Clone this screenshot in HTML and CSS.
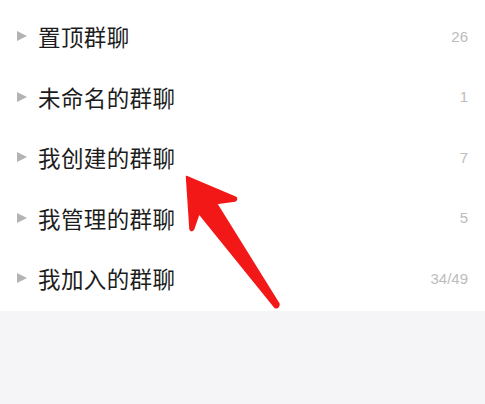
FILE: index.html
```html
<!DOCTYPE html>
<html lang="zh">
<head>
<meta charset="utf-8">
<link rel="stylesheet" href="styles.css">
</head>
<body>
<div class="page">
  <ul class="groups">
    <li class="row"><span class="caret"></span><span class="name">置顶群聊</span><span class="count">26</span></li>
    <li class="row"><span class="caret"></span><span class="name">未命名的群聊</span><span class="count">1</span></li>
    <li class="row"><span class="caret"></span><span class="name">我创建的群聊</span><span class="count">7</span></li>
    <li class="row"><span class="caret"></span><span class="name">我管理的群聊</span><span class="count">5</span></li>
    <li class="row"><span class="caret"></span><span class="name">我加入的群聊</span><span class="count">34/49</span></li>
  </ul>
  <div class="rest"></div>
  <svg class="arrow" width="485" height="404" viewBox="0 0 485 404">
    <path d="M186.5 176.5 L236 197.5 Q237.5 200 235 201 L216.5 203.5 L279 304 Q279 308.5 275 307.5 L199 213.5 L193.5 229.5 Q191 232 190 229 Z" fill="#f31818" stroke="#f31818" stroke-width="1.5" stroke-linejoin="round"/>
  </svg>
</div>
</body>
</html>
```
FILE: styles.css
```css
html, body {
  margin: 0;
  padding: 0;
}
body {
  width: 485px;
  height: 404px;
  overflow: hidden;
  background: #f5f5f7;
  font-family: "Noto Sans CJK SC", "Noto Sans", sans-serif;
}
.page {
  position: relative;
  width: 485px;
  height: 404px;
  display: flex;
  flex-direction: column;
}
.groups {
  list-style: none;
  margin: 0;
  padding: 6px 0 2px 0;
  background: #ffffff;
}
.row {
  height: 60.5px;
  display: flex;
  align-items: center;
  padding: 0 17px 0 17px;
}
.caret {
  width: 0;
  height: 0;
  border-top: 5.5px solid transparent;
  border-bottom: 5.5px solid transparent;
  border-left: 10px solid #b3b3b3;
  margin-right: 11px;
  flex: none;
}
.name {
  font-size: 22.5px;
  color: #1c1c1c;
  letter-spacing: 0.4px;
  flex: 1;
  line-height: 1;
}
.count {
  font-family: "Liberation Sans", "Noto Sans", sans-serif;
  font-size: 15px;
  color: #bcbcbc;
  line-height: 1;
}
.rest {
  flex: 1;
  background: #f5f5f7;
}
.arrow {
  position: absolute;
  left: 0;
  top: 0;
  pointer-events: none;
}
```
